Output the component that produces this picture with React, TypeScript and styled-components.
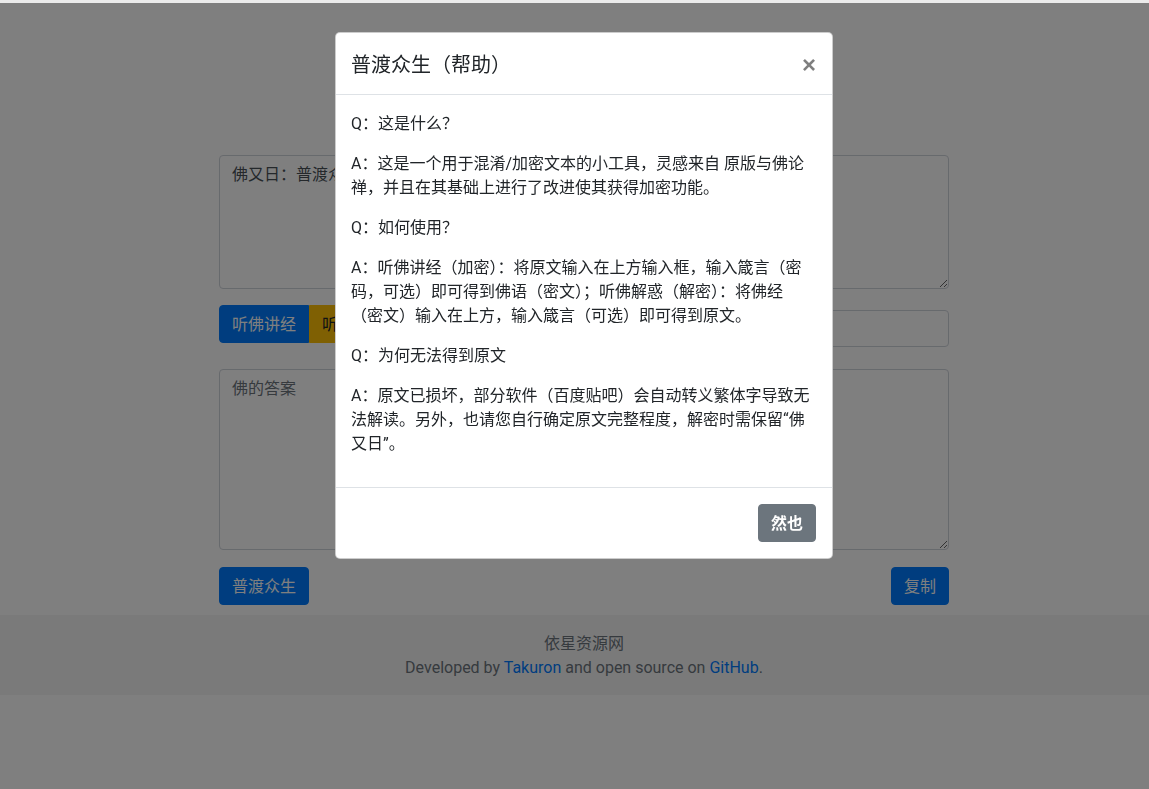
import React from "react";
import styled, { createGlobalStyle, css } from "styled-components";

const GlobalStyle = createGlobalStyle`
  html, body {
    margin: 0;
    padding: 0;
    background: #fff;
    overflow: hidden;
  }
  body {
    font-family: Roboto, "Noto Sans CJK SC", sans-serif;
    font-size: 16px;
    line-height: 1.5;
    color: #212529;
  }
  * {
    box-sizing: border-box;
  }
`;

const Page = styled.div`
  min-height: 789px;
  border-top: 3px solid #ebebeb;
`;

const Main = styled.main`
  width: 730px;
  margin-left: 219px;
  padding-top: 152px;
`;

const TextArea = styled.textarea<{ $height: number }>`
  display: block;
  width: 100%;
  height: ${({ $height }) => $height}px;
  padding: 7px 12px 6px;
  font-family: inherit;
  font-size: 16px;
  line-height: 1.5;
  color: #495057;
  border: 1px solid #ced4da;
  border-radius: 4px;
  background: #fff;
  &::placeholder {
    color: #6c757d;
  }
`;

const ActionRow = styled.div`
  display: flex;
  align-items: flex-start;
  margin: 16px 0 22px;
`;

const ButtonGroup = styled.div`
  display: flex;
`;

const Button = styled.button<{ $variant: "primary" | "warning" | "secondary"; $group?: "left" | "right" }>`
  font-family: inherit;
  font-size: 16px;
  line-height: 1.5;
  padding: 7px 12px 5px;
  border: 1px solid transparent;
  border-radius: 4px;
  cursor: pointer;
  ${({ $variant }) =>
    $variant === "primary"
      ? css`
          background: #007bff;
          border-color: #007bff;
          color: #fff;
        `
      : $variant === "warning"
      ? css`
          background: #ffc107;
          border-color: #ffc107;
          color: #212529;
        `
      : css`
          background: #6c757d;
          border-color: #6c757d;
          color: #fff;
          font-weight: 600;
        `}
  ${({ $group }) =>
    $group === "left" &&
    css`
      border-top-right-radius: 0;
      border-bottom-right-radius: 0;
    `}
  ${({ $group }) =>
    $group === "right" &&
    css`
      border-top-left-radius: 0;
      border-bottom-left-radius: 0;
    `}
`;

const KeyInput = styled.input`
  flex: 1;
  margin: 5px 0 0 16px;
  height: 37px;
  padding: 6px 12px;
  font-family: inherit;
  font-size: 16px;
  border: 1px solid #ced4da;
  border-radius: 4px;
  &::placeholder {
    color: #6c757d;
  }
`;

const BottomRow = styled.div`
  display: flex;
  justify-content: space-between;
  margin: 17px 0 10px;
`;

const Footer = styled.footer`
  background: #f5f5f5;
  height: 80px;
  padding-top: 17px;
  padding-left: 19px;
  text-align: center;
  color: #6c757d;
`;

const FooterLine = styled.div`
  line-height: 24px;
`;

const Link = styled.a`
  color: #007bff;
  text-decoration: none;
`;

const Backdrop = styled.div`
  position: fixed;
  top: 3px;
  left: 0;
  right: 0;
  bottom: 0;
  background: rgba(0, 0, 0, 0.5);
`;

const Modal = styled.div`
  width: 498px;
  margin: 29px 0 0 335px;
  background: #fff;
  border: 1px solid rgba(0, 0, 0, 0.2);
  border-radius: 5px;
  display: flex;
  flex-direction: column;
`;

const ModalHeader = styled.div`
  display: flex;
  align-items: flex-start;
  justify-content: space-between;
  padding: 17px 16px 14px 15px;
  border-bottom: 1px solid #dee2e6;
`;

const ModalTitle = styled.h5`
  margin: 0;
  font-size: 20px;
  font-weight: 400;
  line-height: 1.5;
  color: #212529;
`;

const Close = styled.button`
  background: transparent;
  border: 0;
  padding: 16px;
  margin: -13px -16px -16px auto;
  font-family: "Liberation Sans", Arial, sans-serif;
  font-size: 24px;
  font-weight: 700;
  line-height: 1;
  color: #000;
  opacity: 0.5;
`;

const ModalBody = styled.div`
  padding: 17px 18px 15px 15px;
  color: #212529;
`;

const Para = styled.p`
  margin: 0 0 16px;
`;

const ModalFooter = styled.div`
  display: flex;
  justify-content: flex-end;
  padding: 16px;
  border-top: 1px solid #dee2e6;
`;

export default function App() {
  return (
    <>
      <GlobalStyle />
      <Page>
        <Main>
          <TextArea $height={134} defaultValue="佛又日：普渡众生，佛曰即是空" />
          <ActionRow>
            <ButtonGroup>
              <Button $variant="primary" $group="left">听佛讲经</Button>
              <Button $variant="warning" $group="right">听佛解惑</Button>
            </ButtonGroup>
            <KeyInput placeholder="箴言（密码，可选）" />
          </ActionRow>
          <TextArea $height={181} placeholder="佛的答案" />
          <BottomRow>
            <Button $variant="primary">普渡众生</Button>
            <Button $variant="primary">复制</Button>
          </BottomRow>
        </Main>
        <Footer>
          <FooterLine>依星资源网</FooterLine>
          <FooterLine>
            Developed by <Link href="#">Takuron</Link> and open source on <Link href="#">GitHub</Link>.
          </FooterLine>
        </Footer>
      </Page>
      <Backdrop>
        <Modal>
          <ModalHeader>
            <ModalTitle>普渡众生（帮助）</ModalTitle>
            <Close aria-label="Close">×</Close>
          </ModalHeader>
          <ModalBody>
            <Para>Q：这是什么？</Para>
            <Para>A：这是一个用于混淆/加密文本的小工具，灵感来自 原版与佛论禅，并且在其基础上进行了改进使其获得加密功能。</Para>
            <Para>Q：如何使用？</Para>
            <Para>A：听佛讲经（加密）：将原文输入在上方输入框，输入箴言（密码，可选）即可得到佛语（密文）；听佛解惑（解密）：将佛经（密文）输入在上方，输入箴言（可选）即可得到原文。</Para>
            <Para>Q：为何无法得到原文</Para>
            <Para>A：原文已损坏，部分软件（百度贴吧）会自动转义繁体字导致无法解读。另外，也请您自行确定原文完整程度，解密时需保留“佛又日”。</Para>
          </ModalBody>
          <ModalFooter>
            <Button $variant="secondary">然也</Button>
          </ModalFooter>
        </Modal>
      </Backdrop>
    </>
  );
}
